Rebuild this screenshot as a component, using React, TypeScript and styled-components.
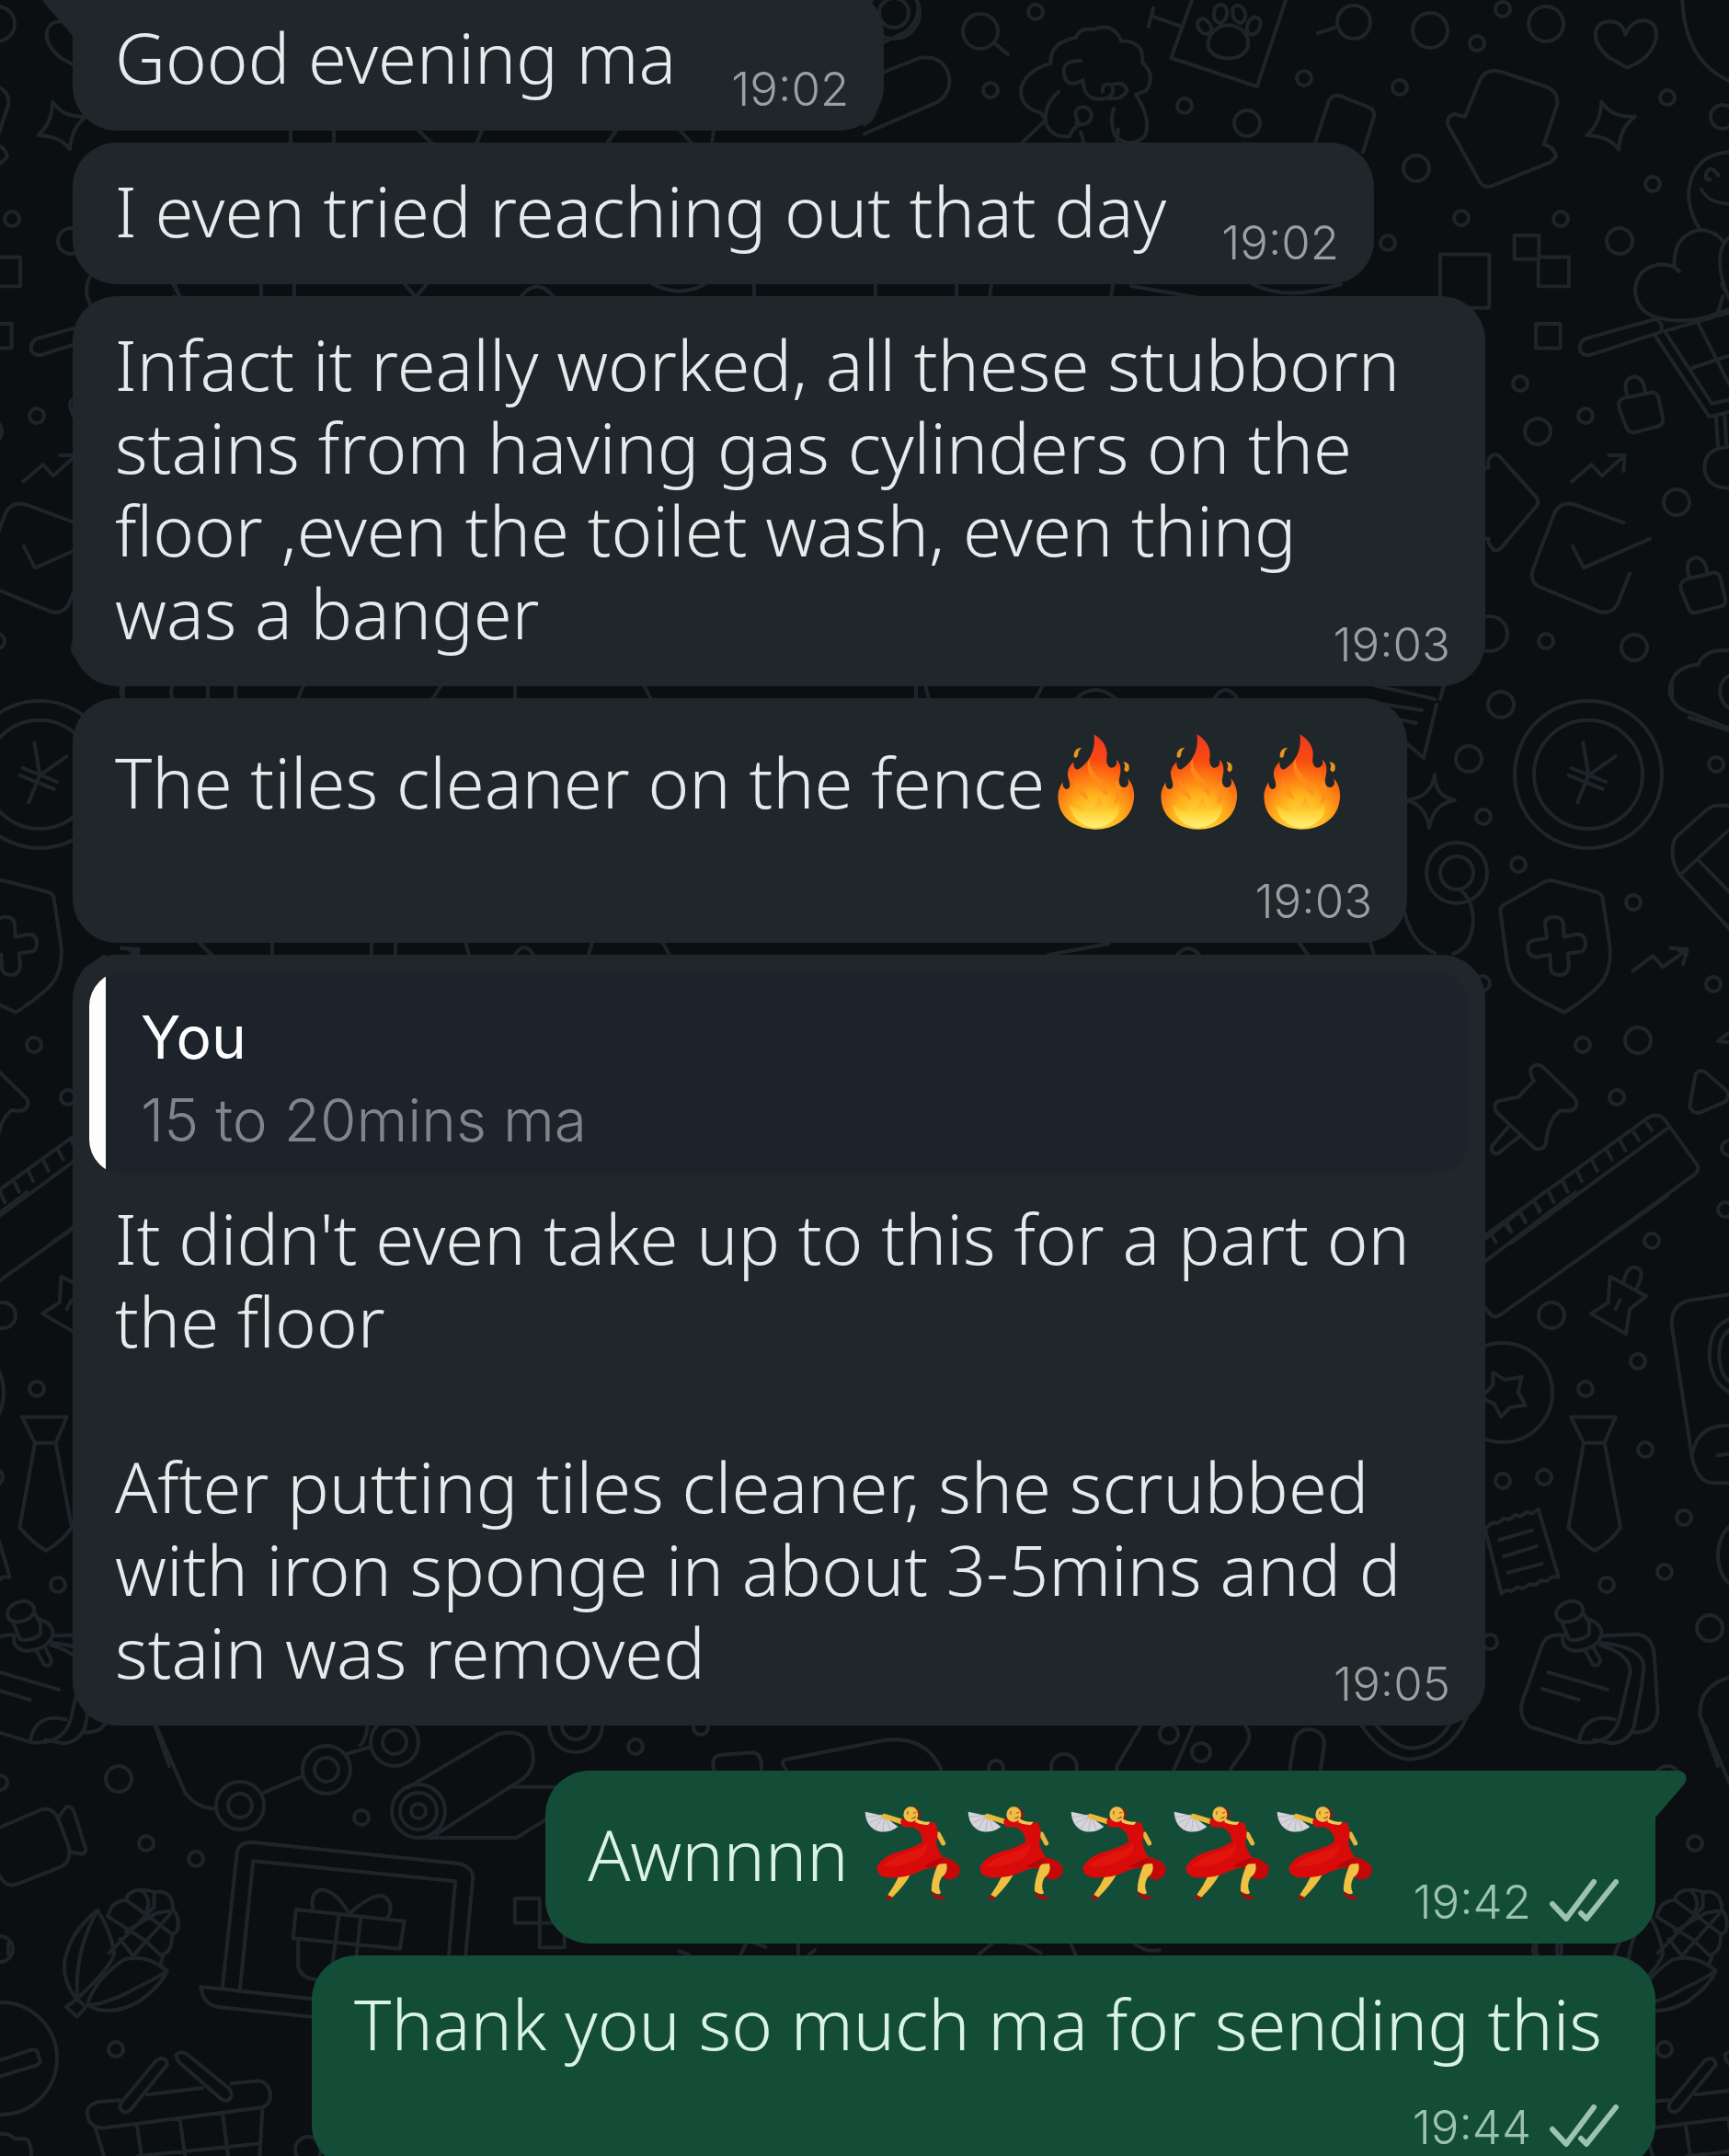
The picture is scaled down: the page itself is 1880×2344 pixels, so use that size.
import React from 'react';
import styled, { createGlobalStyle, css } from 'styled-components';

const GlobalStyle = createGlobalStyle`
  * { box-sizing: border-box; }
  body { margin: 0; background: #0b0f12; }
`;

const Chat = styled.main`
  position: relative;
  height: 100vh;
  overflow: hidden;
  background: #0b0f12;
  font-family: "Noto Sans", "Open Sans", sans-serif;
  font-weight: 300;
`;

const Wallpaper = styled.svg`
  position: absolute;
  top: 0;
  left: 0;
  fill: none;
  stroke: #1e2528;
  stroke-width: 4;
  stroke-linecap: round;
  stroke-linejoin: round;
  path, circle, rect { vector-effect: non-scaling-stroke; }
`;

const Thread = styled.ol`
  position: relative;
  display: flex;
  flex-direction: column;
  gap: 13px;
  list-style: none;
  margin: -12px 0 0;
  padding: 0 80px 0 79px;
`;

const Bubble = styled.li<{ $sent?: boolean; $wide?: boolean; $tail?: boolean; $first?: boolean }>`
  position: relative;
  display: flex;
  flex-direction: column;
  align-self: ${p => (p.$sent ? 'flex-end' : 'flex-start')};
  width: ${p => (p.$wide ? '100%' : 'auto')};
  max-width: 1536px;
  margin-top: ${p => (p.$first ? '36px' : '0')};
  padding: 29px 38px 20px 46px;
  border-radius: 48px;
  color: ${p => (p.$sent ? '#d9f3e6' : '#e6eaec')};
  background: ${p => (p.$sent ? '#144d37' : '#1f272a')};
  ${p => p.$tail && (p.$sent
    ? css`border-top-right-radius: 0;`
    : css`border-top-left-radius: 0;`)}
`;

const TailShape = styled.svg<{ $sent?: boolean }>`
  position: absolute;
  top: 0;
  ${p => (p.$sent
    ? css`left: 100%; fill: #144d37;`
    : css`right: 100%; fill: #1f272a; transform: scaleX(-1);`)}
`;

const Body = styled.div<{ $stacked?: boolean }>`
  display: flex;
  ${p => (p.$stacked
    ? css`flex-direction: column; gap: 28px;`
    : css`align-items: flex-end; justify-content: space-between; gap: 40px;`)}
`;

const Text = styled.p<{ $flush?: boolean }>`
  margin: 0;
  padding: 0 ${p => (p.$flush ? '0' : '20px')} 15px 0;
  font-size: 76px;
  line-height: 90px;
`;

const Lines = styled(Text)`
  padding: 0;
  white-space: pre-line;
`;

const RichText = styled(Text)<{ $space?: boolean }>`
  display: flex;
  align-items: center;
  line-height: 124px;
  column-gap: ${p => (p.$space ? '14px' : '0')};
`;

const EmojiRow = styled.span`
  display: flex;
  height: 104px;
`;

const Meta = styled.span<{ $sent?: boolean }>`
  display: flex;
  align-self: flex-end;
  gap: 20px;
  margin-right: ${p => (p.$sent ? '2px' : '0')};
  font-family: Inter, "Noto Sans", sans-serif;
  font-size: 51px;
  line-height: 50px;
  color: ${p => (p.$sent ? '#9dc2b0' : '#9a9fa2')};
`;

const Quote = styled.blockquote`
  margin: -11px -20px 24px -28px;
  padding: 27px 38px 14px 56px;
  border-radius: 38px;
  background: linear-gradient(to right, #fdfdfd 18px, #1c232b 18px);
  font-family: Inter, "Noto Sans", sans-serif;
  font-size: 64px;
  line-height: 90px;
  color: #7f8589;
`;

const QuoteAuthor = styled.cite`
  display: block;
  font-style: normal;
  font-weight: 400;
  color: #fdfdfd;
`;

const QuoteText = styled.p`
  margin: 0;
`;

const Tail = ({ sent }: { sent?: boolean }) => (
  <TailShape $sent={sent} width="36" height="52" viewBox="0 0 36 52" aria-hidden="true">
    <path d="M-1 0H25Q37 2 32 14L0 51H-1Z" />
  </TailShape>
);

const Ticks = () => (
  <svg width="75" height="46" viewBox="0 0 75 46" role="img" aria-label="Delivered"
    fill="none" stroke="#9dc2b0" strokeWidth="6" strokeLinecap="round" strokeLinejoin="round">
    <path d="M3 27L18 43L48 3M34 37L40 43L72 3" />
  </svg>
);

const Time = ({ at, sent }: { at: string; sent?: boolean }) => (
  <Meta $sent={sent}>
    <time>{at}</time>
    {sent && <Ticks />}
  </Meta>
);

const Fire = () => (
  <svg width="112" height="104" viewBox="0 0 112 104" role="img" aria-label="fire">
    <defs>
      <radialGradient id="fireBody" gradientUnits="userSpaceOnUse" cx="280" cy="400" r="270">
        <stop offset="0" stopColor="#ffe14a" />
        <stop offset=".3" stopColor="#ffb21c" />
        <stop offset=".5" stopColor="#fd7d14" />
        <stop offset=".72" stopColor="#fa4a12" />
        <stop offset="1" stopColor="#ef3a20" />
      </radialGradient>
      <linearGradient id="fireCore" x1="0" y1="0" x2="0" y2="1">
        <stop offset="0" stopColor="#ff9a1c" />
        <stop offset=".5" stopColor="#ffd234" />
        <stop offset="1" stopColor="#fff27a" />
      </linearGradient>
    </defs>
    <g transform="scale(.3333) translate(-114 -121)">
      <path fill="#e8951f" d="M236 165Q207 166 209 196Q222 204 223 184Q225 172 236 165ZM370 212Q394 214 389 238Q378 252 373 236Q380 224 370 212Z" />
      <path fill="url(#fireBody)" d="M274 122C306 140 322 170 316 200C313 222 326 236 338 230C350 224 350 212 347 204C366 218 362 244 358 262C352 284 364 300 378 294C390 288 388 272 384 264C404 286 410 318 402 348C392 398 340 432 280 432C220 432 170 400 160 350C153 318 160 296 173 278C170 296 184 308 194 296C202 282 184 262 190 240C194 226 202 218 208 212C208 228 212 240 224 236C246 224 284 184 274 122Z" />
      <path fill="#ff8d1c" opacity=".8" d="M262 200C240 232 264 262 282 286C296 306 306 318 318 322C326 290 290 268 274 244C264 230 258 216 262 200ZM216 270C212 300 230 322 254 336C256 316 232 304 216 270ZM348 270C338 300 354 318 340 350C372 330 368 296 348 270Z" />
      <path fill="url(#fireCore)" d="M290 326C302 346 306 360 318 366C332 372 340 356 356 350C362 390 326 424 280 426C234 424 202 396 196 352C212 360 226 376 246 372C268 366 288 350 290 326Z" />
    </g>
  </svg>
);

const Dancer = () => (
  <svg width="112" height="104" viewBox="0 0 112 104" role="img" aria-label="woman dancing">
    <g transform="translate(-7 -14) scale(.3333)">
      <path fill="#d5d3db" d="M35 59L94 72L142 108Q118 128 82 124Q38 112 35 59Z" />
      <path stroke="#b9b4c2" strokeWidth="3" fill="none" d="M94 74L50 96M94 74L66 116M98 76L92 124M102 80L118 118M90 70L38 76" />
      <path stroke="#e8b93a" strokeWidth="17" strokeLinecap="round" strokeLinejoin="round" fill="none" d="M98 74L150 90" />
      <path stroke="#e9b53c" strokeWidth="15" strokeLinecap="round" fill="none" d="M274 132L290 162" />
      <path fill="#a30d0d" d="M104 330L128 338Q122 348 104 346ZM250 316Q268 334 296 336Q298 346 278 347Q254 340 250 316Z" />
      <path fill="#efbf3e" d="M146 268L184 262Q164 300 124 338L109 330Q130 302 146 268Z" />
      <path fill="#c40808" d="M276 204Q338 216 345 246Q344 276 312 281Q284 278 262 244Z" />
      <path fill="#f0c143" d="M272 230L300 228Q308 256 284 274Q270 300 282 324Q274 334 252 318Q250 290 264 252Z" />
      <path fill="#d90a0a" d="M154 82L194 86L214 98L262 94Q278 120 267 160Q274 190 288 206Q288 226 262 240Q226 246 204 258Q170 276 106 274Q70 266 74 240Q90 204 148 188Q188 178 222 158Q224 126 192 110L158 108Q146 98 154 82Z" />
      <path fill="#e5190f" opacity=".7" d="M92 236Q130 202 190 188Q226 178 236 162Q244 192 206 214Q150 244 92 236Z" />
      <path fill="#b40707" d="M226 238Q262 216 288 208Q286 226 262 238Q244 244 226 238Z" />
      <path fill="#8e1a12" d="M186 42Q214 44 216 72Q214 86 204 90Q208 62 186 42Z" />
      <path fill="#f2c654" d="M198 78Q216 94 248 92L240 102Q218 104 200 94Z" />
      <ellipse cx="184" cy="68" rx="24" ry="25" fill="#f0bd48" />
      <path fill="none" stroke="#a8691c" strokeWidth="4" d="M176 58Q170 64 176 68M192 64L202 60M186 80Q196 82 200 74" />
    </g>
  </svg>
);

const Emojis = ({ kind, count }: { kind: 'fire' | 'dancer'; count: number }) => (
  <EmojiRow>
    {Array.from({ length: count }, (_, i) => (kind === 'fire' ? <Fire key={i} /> : <Dancer key={i} />))}
  </EmojiRow>
);

/* Wallpaper dots: x, y, radius */
const DOTS: [number, number, number][] = [
  [1634, 10, 8], [1606, 47, 8], [1681, 26, 19], [1813, 106, 8], [1873, 127, 13], [1797, 200, 8],
  [1589, 237, 8], [1697, 238, 8], [1761, 262, 14], [1653, 417, 8], [1672, 469, 14], [1724, 452, 8],
  [1823, 546, 14], [1681, 697, 8], [1777, 704, 14], [1632, 766, 14], [1620, 689, 19],
  [1597, 825, 14], [1613, 888, 8], [1651, 940, 8], [1866, 831, 8], [1776, 981, 8], [1612, 1069, 8],
  [1863, 1070, 8], [1721, 1136, 8], [1781, 1131, 14], [1758, 1193, 8], [1880, 1248, 8], [1876, 1315, 8],
  [1796, 1349, 8], [1687, 1430, 14], [1781, 1480, 8], [1724, 1510, 8], [1789, 1576, 8], [1679, 1606, 8],
  [1634, 1610, 8], [1831, 1650, 8], [1810, 1709, 8], [1747, 1723, 8], [1620, 1785, 8], [1859, 1770, 14],
  [1271, 1885, 10], [1306, 1905, 10], [129, 1934, 14], [159, 2004, 8], [213, 2021, 8], [393, 1976, 8],
  [0, 1938, 8], [0, 2119, 14], [126, 2228, 8], [335, 2337, 14], [261, 1963, 26], [261, 1963, 13],
  [355, 1924, 26], [355, 1924, 13], [429, 1894, 26], [429, 1894, 13], [455, 1969, 29], [455, 1969, 20],
  [455, 1969, 8], [1066, 34, 19], [1126, 13, 8], [1077, 98, 8], [1418, 85, 8], [1288, 115, 8],
  [1356, 134, 14], [1522, 95, 8], [1472, 24, 18], [1555, 33, 19], [1540, 183, 14], [1509, 264, 8],
  [972, 14, 16], [972, 14, 28], [1727, 842, 59], [1727, 842, 80], [1584, 949, 18], [1584, 949, 33],
  [1634, 1514, 54], [691, 1899, 8], [1157, 1921, 14], [1083, 1922, 8], [626, 1876, 15], [626, 1876, 29],
  [762, 1878, 8], [1, 2238, 61],
];

const Doodles = () => (
  <g id="doodles">
    {DOTS.map(([x, y, r], i) => <circle key={i} cx={x} cy={y} r={r} />)}
    <g transform="translate(940 0) scale(.5995 .4847)">
      <path d="M237 98L260 122M852 62L822 74M515 60L524 18M520 36L572 58" />
      <path d="M594 0L556 130L712 194L764 0" />
      <path d="M623 100C623 76 640 56 660 56C680 56 696 76 696 96C696 118 680 131 660 131C640 131 623 118 623 100Z" />
      <path d="M604 56C604 44 612 40 618 44C630 54 632 66 626 74C616 80 606 70 604 56ZM634 28C636 8 650 6 656 18C660 32 656 46 646 52C636 50 632 40 634 28ZM668 30C666 10 678 8 686 18C694 32 692 46 682 52C672 48 668 42 668 30ZM694 58C698 38 710 32 718 46C720 62 712 76 702 78C694 74 692 66 694 58Z" />
      <path d="M30 98L74 72Q98 50 98 10L94 0M30 164L100 130Q146 122 154 176Q156 208 134 228L0 300M20 230Q24 262 0 280" />
      <path d="M286 320L328 270Q326 260 318 252Q280 240 284 196Q296 156 338 142Q334 96 384 84Q390 60 416 66Q450 48 466 92Q508 92 504 140Q530 170 510 204L492 212Q522 270 508 306Q480 336 454 304Q444 270 452 244M392 136Q352 136 364 176Q372 196 396 180Q398 232 440 220Q456 210 448 190Q430 184 432 206M448 190Q472 180 476 204Q466 226 440 220M352 206Q322 240 330 280Q342 310 372 306Q378 286 390 280Q372 240 400 240Q418 250 408 272Q398 284 384 276M392 296L398 320M460 290L458 320" />
      <path d="M818 318L842 226Q850 210 864 216L914 240Q926 246 924 262L904 342" />
      <path d="M1089 262L1116 180Q1128 152 1152 160L1236 194Q1260 206 1256 236L1232 324Q1252 330 1254 352L1244 364L1140 416Q1124 424 1116 408L1058 280Q1056 258 1072 256Z" />
    </g>
    <g transform="translate(1580 0) scale(.3333 .5102)">
      <path d="M568 144L512 124Q456 96 466 64Q480 42 520 46Q556 50 562 74Q584 40 630 44Q668 50 662 80Q650 124 568 144Z" />
      <path d="M484 217Q508 240 536 244Q564 250 594 248Q546 270 540 318Q510 290 436 288Q480 266 484 217Z" />
      <path d="M748 0Q756 130 900 172" />
      <path d="M900 324Q780 330 768 410Q768 450 804 488M866 374Q842 350 826 368Q820 386 838 382M810 404Q836 434 900 434" />
      <path d="M738 578L722 570Q716 500 806 490Q860 492 884 518Q850 560 900 636M738 578Q714 560 668 564Q596 574 594 620Q600 672 690 680Q780 690 860 668L900 660M884 518L900 506M880 632L864 664" />
      <path d="M660 680L430 722Q402 738 420 752Q430 758 450 756L676 708Q690 690 660 680ZM690 706L900 666M690 706L844 860L900 852M660 716L836 888L900 878M796 684L900 818M780 784L900 758M858 890L864 950M886 886L892 950M900 952Q820 956 820 996Q824 1040 900 1040" />
      <rect x="200" y="502" width="80" height="50" /><rect x="278" y="548" width="100" height="62" />
      <rect x="270" y="690" width="80" height="52" /><rect x="-42" y="542" width="160" height="114" />
      <path d="M568 842Q550 806 592 802Q624 806 626 836M540 860Q544 850 560 848L650 836Q664 836 670 848L684 890Q686 904 670 908L590 922Q572 922 566 912L542 870Z" />
      <path d="M770 1228Q752 1192 794 1188Q826 1192 828 1220M742 1248Q746 1238 762 1234L852 1220Q866 1220 872 1232L888 1276Q890 1290 874 1292L790 1306Q774 1306 768 1296L744 1258Z" />
      <path d="M388 1026L452 990L486 1014L560 970M508 970H560L556 1004" />
      <path d="M102 998L116 996Q110 976 130 970Q144 966 156 976L272 1060Q282 1072 270 1080L156 1168Q138 1180 122 1164Q112 1154 116 1148H102" />
      <path d="M556 1114L400 1076Q350 1066 330 1094L260 1214Q250 1240 280 1250L480 1304Q520 1308 536 1288L576 1222M390 1164L426 1210L642 1148" />
      <path d="M900 1386Q820 1382 800 1416Q710 1420 706 1476Q720 1510 780 1520L900 1552M900 1440Q870 1450 870 1476Q876 1500 900 1508" />
    </g>
    <g transform="translate(1580 780) scale(.3333 .3571)">
      <path d="M424 76L442 176L530 118M442 176L406 258M386 154L498 196M376 176L488 218" />
      <path d="M900 268H860Q840 270 826 282L730 362Q714 376 716 420Q718 450 740 480L900 642M740 480L900 342M800 434L900 530M770 0L900 40" />
      <path d="M300 500Q314 494 330 498L470 532Q488 540 488 552L512 700Q516 760 490 800Q460 840 364 898Q250 850 206 810Q180 780 174 730L154 590Q154 576 170 568Z" />
      <path d="M300 630Q300 608 330 608Q360 608 360 634L362 668L404 660Q432 660 432 688Q432 712 410 714L374 718L378 752Q376 784 348 784Q318 784 318 758L316 722L272 730Q244 728 244 700Q246 680 266 678L306 672Z" />
      <path d="M586 772L652 726L684 760L762 708M708 702L764 706L750 752" />
      <path d="M0 720Q64 700 66 610Q60 550 24 526" />
      <path d="M264 1106Q238 1068 270 1058Q286 1056 300 1070L398 1160Q412 1180 392 1194Q380 1200 350 1196Q310 1224 302 1300Q290 1320 266 1312L140 1200Q130 1180 146 1168L212 1156ZM180 1246L126 1306Q122 1330 146 1328L216 1276" />
      <path d="M100 1580L640 1216Q668 1204 688 1222L796 1362Q804 1376 790 1390L480 1600M190 1600L704 1248M648 1256L632 1236M606 1288L590 1264M562 1318L546 1290M518 1346L502 1318M470 1380L454 1350M420 1412L404 1380M374 1444L358 1412M328 1476L312 1444M282 1506L266 1476M236 1538L220 1506M190 1566L174 1536" />
      <path d="M900 960L864 986L900 990M790 1090Q800 1068 824 1080L892 1136Q904 1154 888 1170L804 1204Q780 1206 772 1184Z" />
    </g>
    <g transform="translate(1580 1300) scale(.3333 .3954)">
      <path d="M90 128L300 -12M90 190L400 -10M700 0L150 330Q132 336 122 326L96 300M140 128L126 108M188 100L172 80M236 70L220 50M284 40L268 20" />
      <path d="M512 222L630 276L576 312L564 380L450 324L506 294ZM558 234Q568 190 600 198Q628 208 600 252M544 288L530 312" />
      <path d="M900 272L770 288Q708 300 714 360L776 700Q790 790 850 790H900M900 632Q800 630 782 706M862 714L900 710M900 340Q836 360 836 440Q840 510 900 540M900 370Q866 390 868 440Q870 490 900 510" />
      <path d="M102 546L130 520V486L168 506L224 498L212 540L236 576L186 582L156 608L134 572L102 560" />
      <path d="M384 608H530L494 680H426ZM426 680L376 912Q420 956 462 976Q516 950 546 912L494 680" />
      <path d="M106 914L126 900L146 900L164 888L184 890L202 878L220 882L240 870L258 874L278 862L344 1048L322 1048L306 1060L286 1058L268 1070L248 1068L230 1080L210 1076L190 1088L174 1084L158 1094L104 914M150 946L258 920M164 992L272 964M180 1036L290 1012" />
      <path d="M336 1150Q340 1120 390 1114Q424 1118 424 1142Q416 1168 370 1172Q336 1170 336 1150ZM356 1176L378 1220Q416 1226 444 1206V1176L424 1146M440 1164Q484 1176 484 1204Q476 1246 400 1252Q352 1246 358 1214L370 1200M430 1250L456 1290Q478 1296 480 1276L460 1244" />
      <path d="M356 1208Q304 1204 290 1236L226 1390Q212 1434 250 1460L410 1502Q530 1514 548 1420L578 1310Q580 1260 480 1236M410 1502Q426 1420 528 1440M490 1210L600 1206Q650 1212 656 1260L668 1420Q660 1476 590 1476M484 1230Q610 1240 622 1290Q620 1340 596 1430Q590 1500 520 1506L460 1496M310 1310L504 1358M292 1356L410 1386" />
      <path d="M900 910Q864 940 864 990Q866 1040 900 1066M900 1324Q800 1350 806 1430L864 1568" />
    </g>
    <g transform="translate(0 1860) scale(.3954 .3333)">
      <path d="M-20 390L110 324Q140 310 158 346L188 440Q200 490 166 510L50 564Q16 580 0 540M160 350L180 316Q196 306 204 330L236 452Q234 470 220 466L190 460" />
      <path d="M430 50L510 270Q550 324 592 318M722 268L830 214M956 140L1018 118M1010 50Q1006 100 990 112M1122 250L1370 76Q1430 56 1460 110Q1480 180 1440 220L1200 402M1400 248H1560M1170 414H1420L1508 350" />
      <path d="M212 940L182 966L212 998L236 966ZM208 936Q160 860 186 780Q206 710 268 650Q306 720 314 790Q310 830 212 940M212 930Q206 780 268 652M240 960Q260 876 340 812Q400 790 460 848Q420 880 380 900Q300 956 240 960Q300 1000 380 950Q440 900 460 848M440 830L450 796" />
      <path d="M298 668Q306 620 346 618Q352 584 390 584Q420 586 424 592Q474 580 476 648Q498 680 486 720Q470 730 472 750Q470 790 442 796M350 620L476 730M296 670L400 750L444 800M424 592L424 640L300 790M476 650L430 660L346 720M330 744L366 800L470 660M390 586Q420 620 400 660" />
      <path d="M612 900L652 460Q660 424 700 430L1260 498Q1304 510 1300 550L1280 800M660 906L696 490L1252 556L1234 800M552 900L860 940M552 900Q560 960 600 966L870 1000" />
      <path d="M814 648L1112 686L1100 776L806 742ZM932 664L914 830M992 672L980 800M820 750V836Q830 876 880 878M960 662Q920 580 880 584Q850 600 862 654M960 662Q1030 590 1056 606Q1086 630 1066 676" />
      <path d="M0 1140L86 1106Q100 1102 104 1116L110 1140Q112 1150 100 1156L0 1192M0 1380Q26 1376 40 1396H68Q86 1400 86 1450" />
      <path d="M430 1140Q456 1124 460 1154L360 1300Q340 1320 330 1296L332 1280ZM484 1124Q494 1106 514 1120L630 1232Q646 1260 624 1272Q610 1270 604 1262L490 1144ZM330 1270L270 1276Q230 1290 242 1326Q250 1364 290 1360L720 1294Q750 1280 742 1240Q730 1200 700 1208L636 1216M404 1252L556 1230M262 1362L288 1460M376 1346L390 1460M494 1328L510 1460M612 1310L628 1460M722 1294L714 1460M380 1452L710 1412" />
      <rect x="1416" y="612" width="68" height="80" /><rect x="1484" y="692" width="68" height="80" />
    </g>
    <g transform="translate(560 1860) scale(.4464 .3333)">
      <path d="M484 190Q476 150 500 144L580 136Q602 140 600 190M660 190Q640 160 670 156L900 96Q1000 80 1038 190M1524 50L1466 180V194" />
      <path d="M400 784L424 796M550 794L566 750L610 770M690 750V794M730 780L716 796M1130 794L1170 750L1240 760L1280 790M1350 750L1366 796M1510 760Q1540 790 1570 780" />
    </g>
    <g transform="translate(1240 1860) scale(.4082 .3333)">
      <path d="M140 50L90 190M280 50Q300 80 280 120L240 190M398 190L410 100Q420 60 450 60Q490 66 490 110L480 190M590 50Q650 156 720 158Q820 150 870 20M630 50Q680 120 720 122Q790 120 826 40M1050 760Q1040 780 1050 794M1110 760V794" />
    </g>
    <path d="M316 142V156M363 142V156M455 142L470 156M524 142L518 156M670 142L660 156M740 142L752 156M776 142L774 156M188 309L196 323M284 309V323M320 309V323M440 309L452 323L464 309M566 323Q584 300 602 323M710 309Q740 324 766 309M820 309V323M952 309V323M1040 309V323M1078 309L1076 323M1210 309L1208 323M1230 311L1300 323M1362 309Q1400 328 1458 309" />
    <path d="M134 745V760M226 745V760M256 745V760M330 745L324 760M480 745L470 760M560 745V760M700 745L708 760M996 745V760M1006 745L1010 760M1134 745L1126 760M1170 760Q1190 740 1214 760M1320 760Q1332 740 1346 760M1494 745L1560 760M1570 745L1566 760M140 1032L150 1038M216 1024L230 1038M296 1024V1038M404 1024V1038M430 1024V1038M506 1024L510 1038M560 1038Q570 1022 580 1038M644 1024L640 1038M720 1024L728 1038M1140 1038L1206 1026M1280 1038Q1292 1024 1304 1038M1412 1024L1422 1038M1490 1024L1494 1038" />
    <path d="M1500 765L1546 772M1510 780L1540 786M1520 800L1548 824L1562 766M1560 842Q1556 868 1528 870Q1550 874 1554 900Q1558 874 1582 870Q1560 866 1560 842ZM1524 974Q1530 1024 1560 1036" />
  </g>
);

export default function App() {
  return (
    <>
      <GlobalStyle />
      <Chat>
        <Wallpaper width="1880" height="2344" viewBox="0 0 1880 2344" aria-hidden="true">
          <Doodles />
          <use href="#doodles" x="-1684" />
          <use href="#doodles" x="1684" />
        </Wallpaper>
        <Thread>
          <Bubble $tail>
            <Tail />
            <Body>
              <Text>Good evening ma</Text>
              <Time at="19:02" />
            </Body>
          </Bubble>
          <Bubble>
            <Body>
              <Text>I even tried reaching out that day</Text>
              <Time at="19:02" />
            </Body>
          </Bubble>
          <Bubble $wide>
            <Lines>{'Infact it really worked, all these stubborn\nstains from having gas cylinders on the\nfloor ,even the toilet wash, even thing'}</Lines>
            <Body>
              <Text>was a banger</Text>
              <Time at="19:03" />
            </Body>
          </Bubble>
          <Bubble>
            <Body $stacked>
              <RichText>
                <span>The tiles cleaner on the fence</span>
                <Emojis kind="fire" count={3} />
              </RichText>
              <Time at="19:03" />
            </Body>
          </Bubble>
          <Bubble $wide>
            <Quote>
              <QuoteAuthor>You</QuoteAuthor>
              <QuoteText>15 to 20mins ma</QuoteText>
            </Quote>
            <Lines>{"It didn't even take up to this for a part on\nthe floor\n\nAfter putting tiles cleaner, she scrubbed\nwith iron sponge in about 3-5mins and d"}</Lines>
            <Body>
              <Text>stain was removed</Text>
              <Time at="19:05" />
            </Body>
          </Bubble>
          <Bubble $sent $tail $first>
            <Tail sent />
            <Body>
              <RichText $flush $space>
                <span>Awnnnn</span>
                <Emojis kind="dancer" count={5} />
              </RichText>
              <Time at="19:42" sent />
            </Body>
          </Bubble>
          <Bubble $sent>
            <Body $stacked>
              <Text>Thank you so much ma for sending this</Text>
              <Time at="19:44" sent />
            </Body>
          </Bubble>
        </Thread>
      </Chat>
    </>
  );
}
